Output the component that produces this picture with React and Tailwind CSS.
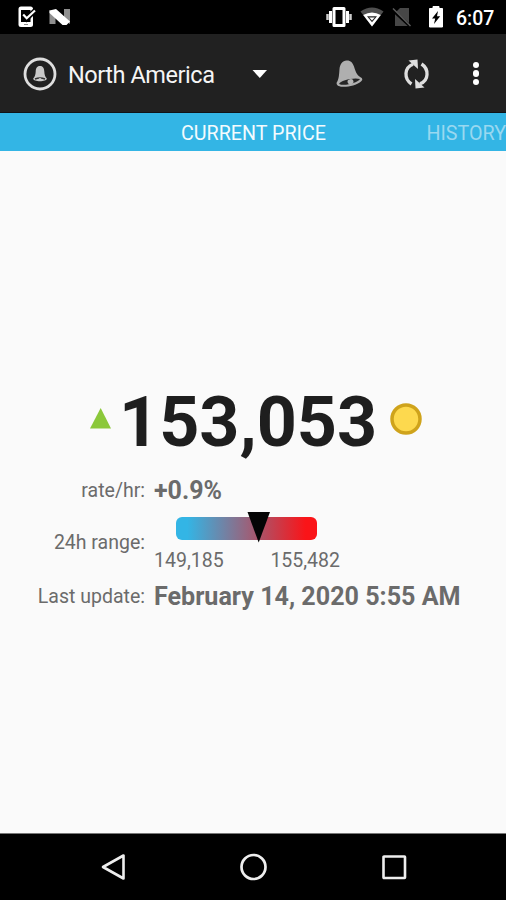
import React from "react";

function StatusBar() {
  return (
    <div className="h-[34px] shrink-0 bg-black flex items-center text-white">
      <svg className="ml-[18px] w-[18px] h-[22px]" viewBox="0 0 18 22">
        <rect x="0.5" y="0.5" width="14.5" height="20.5" rx="2.5" fill="#fff" />
        <rect x="3" y="4" width="9.5" height="12" fill="#000" />
        <path d="M5 9l3.5 3.8L17 4.5" fill="none" stroke="#000" strokeWidth="5" />
        <path d="M5.2 8.5l3.5 3.8L17 4.5" fill="none" stroke="#fff" strokeWidth="2.2" />
        <path d="M6 18.5h4" stroke="#888" strokeWidth="1" />
      </svg>
      <svg className="ml-[13px] w-[22px] h-[18px]" viewBox="0 0 22 18">
        <path d="M0.5 2v14h6V7zM15 1h6v15l-6-4z" fill="#8f8f8f" />
        <path d="M0.5 2.5L7 1l14 12.5-3.5 3.5h-4L0.5 5z" fill="#fff" />
      </svg>

      <svg className="ml-auto w-[26px] h-[20px]" viewBox="0 0 26 20">
        <path d="M8 1.5h10v17H8z" fill="none" stroke="#fff" strokeWidth="3" strokeLinejoin="round" />
        <path d="M4.5 4v12M21.5 4v12" stroke="#fff" strokeWidth="3" />
        <path d="M1.5 7v6M24.5 7v6" stroke="#ccc" strokeWidth="2.5" />
      </svg>
      <svg className="ml-[8px] w-[24px] h-[20px]" viewBox="0 0 24 20">
        <path d="M0.5 4.5Q12-3.5 23.5 4.5L12 19.5z" fill="#4f4f4f" />
        <path d="M3.2 8Q12 3 20.8 8L12 19.5z" fill="#fff" />
        <path d="M7 9.2h10l-5 6z" fill="#222" />
        <path d="M9.2 10.5h5.6L12 13.5z" fill="#fff" />
      </svg>
      <svg className="ml-[8px] w-[20px] h-[20px]" viewBox="0 0 20 20">
        <path d="M8 1h9v18H3V6z" fill="#474747" />
        <path d="M0 2.5L19 20" stroke="#000" strokeWidth="3" />
        <path d="M1 1.5L18.5 19" stroke="#5c5c5c" strokeWidth="1.5" />
      </svg>
      <svg className="ml-[16px] w-[16px] h-[22px]" viewBox="0 0 16 22">
        <path d="M5 0.5h6v2h3.5V21h-13V2.5H5z" fill="#fff" stroke="#fff" strokeLinejoin="round" />
        <path d="M10 5l-6 7.5h3.2L6 18l6.2-7.8H9z" fill="#000" />
      </svg>
      <span className="ml-[12px] mr-[11px] mt-[3px] w-[39px] whitespace-nowrap text-[19.5px] leading-[20px] font-medium">
        6:07
      </span>
    </div>
  );
}

function AppBar() {
  return (
    <div className="h-[79px] shrink-0 bg-[#212121] border-b border-[#101318] flex items-center pt-[1px]">
      <svg className="ml-[23px] w-[34px] h-[34px]" viewBox="0 0 34 34">
        <circle cx="17" cy="17" r="15" fill="none" stroke="#dedede" strokeWidth="2.8" />
        <path
          d="M17 9c-3.3 0-4.2 2.6-4.3 5.5-.1 3.5-1 5.5-2.5 7 0 1.8 3.2 2.7 6.8 2.7s6.8-.9 6.8-2.7c-1.5-1.5-2.4-3.5-2.5-7C21.2 11.6 20.3 9 17 9z"
          fill="#c9c9c9"
        />
        <path d="M12 22q5-2 10 0" fill="none" stroke="#333" strokeWidth="1.4" />
        <circle cx="17" cy="22.5" r="1.5" fill="#ccc" />
      </svg>
      <span className="ml-[11px] mt-[3px] w-[150px] whitespace-nowrap text-[23.5px] leading-[26px] tracking-[-0.45px] text-[#f5f5f5]">
        North America
      </span>
      <svg className="ml-[34px] w-[16px] h-[10px]" viewBox="0 0 16 10">
        <path d="M0.5 1h14.500L7.8 9z" fill="#fff" />
      </svg>
      <svg className="ml-[67px] w-[30px] h-[30px]" viewBox="0 0 30 30">
        <path
          d="M11.5 1.5C7.5 2 5 5 4.5 10 4 16 4 20 1.7 23.5c-.7 2.3 1.5 4.1 5.8 4.300 6.5.3 14-1.800 18.5-5.300 2-1.700 1.700-3.300-.5-4.300C21.500 16 20.500 12 19 7.500 17.500 3.500 15.500 1.200 11.500 1.500z"
          fill="#afafaf"
        />
        <path d="M4 25C5 21.500 19 18 25 20 22 24 9.500 27.500 4 25z" fill="#262626" />
        <ellipse cx="15.5" cy="22.7" rx="3" ry="2.6" fill="#b5b5b5" transform="rotate(-12 15.5 22.7)" />
      </svg>
      <svg className="ml-[38px] w-[28px] h-[32px]" viewBox="0 0 28 32" fill="none">
        <path d="M8.5 26C0.8 21 1 9.5 10 6.2" stroke="#dedede" strokeWidth="3.3" />
        <path d="M5.5 2.5L14.5 1.500 15 11z" fill="#dedede" />
        <path d="M18.500 6C26.200 11 26 22.500 17 25.800" stroke="#dedede" strokeWidth="3.3" />
        <path d="M21.500 29.500L12.500 30.500 12 21z" fill="#dedede" />
      </svg>
      <div className="ml-auto mr-[27px] flex flex-col gap-[2px]">
        <span className="size-[6.5px] rounded-full bg-white" />
        <span className="size-[6.5px] rounded-full bg-white" />
        <span className="size-[6.5px] rounded-full bg-white" />
      </div>
    </div>
  );
}

function Tabs() {
  return (
    <div className="h-[38px] shrink-0 bg-[#33b5e5] flex items-center overflow-hidden whitespace-nowrap pt-[3px] text-[19.7px] leading-[24px]">
      <span className="ml-[181px] w-[146px] text-[#f4fbfe]">CURRENT PRICE</span>
      <span className="ml-[100px] text-[#99d8f0]">HISTORY</span>
    </div>
  );
}

function RangeBar({ low, high }) {
  return (
    <div className="w-[186px]">
      <div className="relative ml-[22px] w-[141px] h-[23px] rounded-[6px] bg-linear-to-r/srgb from-[#33b5e5] from-8% to-[#fa1418] to-92%">
        <svg className="absolute left-[71px] -top-[5px] w-[24px] h-[31px]" viewBox="0 0 24 31">
          <path d="M0.5 0h22.500L11.7 30.5z" fill="#050505" />
        </svg>
      </div>
      <div className="mt-[11px] flex justify-between text-[19.5px] leading-[20px]">
        <span>{low}</span>
        <span>{high}</span>
      </div>
    </div>
  );
}

function CurrentPrice() {
  return (
    <div className="flex-1 bg-[#fafafa] pt-[236px] text-[#6b6b6b]">
      <div className="flex items-center h-[70px]">
        <svg className="ml-[90px] mb-[7px] w-[22px] h-[21px]" viewBox="0 0 22 21">
          <path d="M10.7 0l10.3 20.5H0z" fill="#8bc83a" />
        </svg>
        <span className="ml-[7px] w-[258px] whitespace-nowrap text-[70px] leading-[70px] font-bold text-[#1e1e1e]">
          153,053
        </span>
        <svg className="ml-[13px] mb-[6px] w-[32px] h-[32px]" viewBox="0 0 32 32">
          <circle cx="16" cy="16" r="14" fill="#fdd94e" stroke="#cfa31b" strokeWidth="3.5" />
        </svg>
      </div>
      <div className="mt-[21px] grid grid-cols-[145px_1fr] gap-x-[9px] whitespace-nowrap">
        <span className="h-[26px] text-right text-[19.5px] leading-[25px]">rate/hr:</span>
        <span className="text-[25px] leading-[26px] font-bold">+0.9%</span>
        <span className="mt-[26px] text-right text-[19.5px] leading-[26px]">24h range:</span>
        <div className="mt-[13px]">
          <RangeBar low="149,185" high="155,482" />
        </div>
        <span className="mt-[13px] text-right text-[19.5px] leading-[25px]">Last update:</span>
        <span className="mt-[13px] text-[25.1px] leading-[26px] font-bold">
          February 14, 2020 5:55 AM
        </span>
      </div>
    </div>
  );
}

function NavBar() {
  return (
    <div className="h-[67px] shrink-0 bg-black border-t border-[#777] flex items-center">
      <svg className="ml-[100px] w-[28px] h-[30px]" viewBox="0 0 28 30">
        <path d="M23.5 3.5v23L3 15z" fill="none" stroke="#eee" strokeWidth="2.6" strokeLinejoin="round" />
      </svg>
      <svg className="ml-[111px] w-[30px] h-[30px]" viewBox="0 0 30 30">
        <circle cx="14.5" cy="15" r="12" fill="none" stroke="#eee" strokeWidth="2.7" />
      </svg>
      <svg className="ml-[111px] w-[28px] h-[30px]" viewBox="0 0 28 30">
        <rect x="3.5" y="4.5" width="21.5" height="21.5" rx="0.5" fill="none" stroke="#eee" strokeWidth="2.6" />
      </svg>
    </div>
  );
}

export default function App() {
  return (
    <div className="w-[506px] h-[900px] flex flex-col overflow-hidden font-[Roboto,sans-serif]">
      <StatusBar />
      <AppBar />
      <Tabs />
      <CurrentPrice />
      <NavBar />
    </div>
  );
}
